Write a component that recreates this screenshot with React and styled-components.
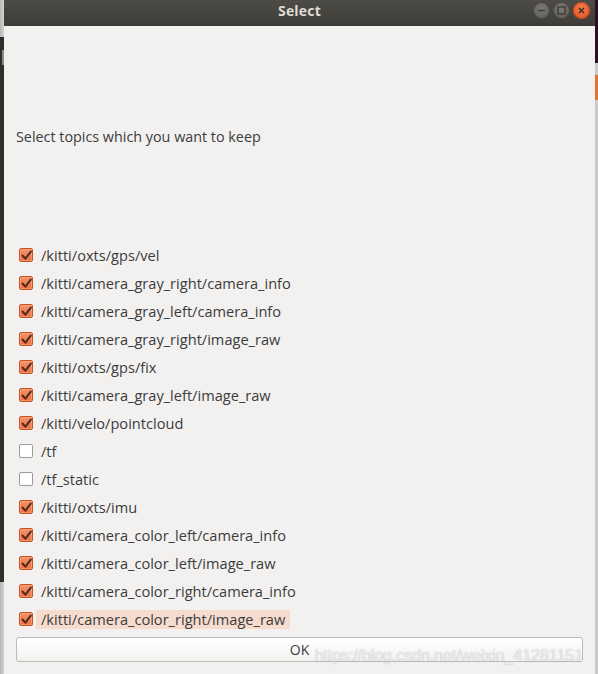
import React from "react";
import styled, { createGlobalStyle } from "styled-components";

const Global = createGlobalStyle`
  html, body { margin: 0; padding: 0; background: #2f2d29; }
  body { font-family: "Open Sans", "DejaVu Sans", sans-serif; }
`;

const Screen = styled.div`
  width: 598px;
  height: 674px;
  display: flex;
  overflow: hidden;
`;

const Side = styled.div`
  width: ${(p) => p.w}px;
  display: flex;
  flex-direction: column;
  flex-shrink: 0;
`;

const SidePiece = styled.div`
  height: ${(p) => (p.h ? `${p.h}px` : "auto")};
  flex: ${(p) => (p.h ? "none" : 1)};
  background: ${(p) => p.bg};
`;

const Win = styled.div`
  flex: 1;
  display: flex;
  flex-direction: column;
  background: #f2f1f0;
`;

const TitleBar = styled.div`
  height: 26px;
  box-sizing: border-box;
  padding-bottom: 5px;
  flex-shrink: 0;
  background: linear-gradient(#4d4b46, #3d3c37);
  display: flex;
  align-items: center;
  justify-content: center;
  position: relative;
  color: #dfdbd2;
  font-weight: 700;
  font-size: 14px;
  letter-spacing: 0.2px;
`;

const Controls = styled.div`
  position: absolute;
  right: 5px;
  top: 2px;
  display: flex;
  gap: 3px;
`;

const Ctrl = styled.div`
  width: 17px;
  height: 17px;
  border-radius: 50%;
  background: ${(p) => (p.close ? "radial-gradient(circle at 50% 35%, #f37a4c, #e0501f)" : "radial-gradient(circle at 50% 35%, #7a7872, #5d5b56)")};
  box-shadow: inset 0 0 0 1px ${(p) => (p.close ? "#b8441c" : "#45433f")};
  display: flex;
  align-items: center;
  justify-content: center;
`;

const Body = styled.div`
  flex: 1;
  display: flex;
  flex-direction: column;
  padding: 0 12px 0 12px;
`;

const Prompt = styled.div`
  margin-top: 101px;
  line-height: 20px;
  font-size: 14.35px;
  color: #3c3c3c;
`;

const List = styled.div`
  margin-top: 94px;
  display: flex;
  flex-direction: column;
`;

const Row = styled.div`
  height: 28px;
  display: flex;
  align-items: center;
  padding-left: 3px;
  gap: 3px;
`;

const Box = styled.div`
  width: 14px;
  height: 14px;
  box-sizing: border-box;
  border-radius: 2px;
  border: 1px solid ${(p) => (p.on ? "#c9521f" : "#9c9a97")};
  background: ${(p) => (p.on ? "linear-gradient(#f69168, #ee7040)" : "#ffffff")};
  box-shadow: ${(p) => (p.on ? "inset 0 0 0 1px rgba(255,200,170,0.35)" : "none")};
  display: flex;
  align-items: center;
  justify-content: center;
`;

const Label = styled.span`
  font-size: 14.6px;
  line-height: 19px;
  padding: 0 5px;
  color: #3c3c3c;
  background: ${(p) => (p.hl ? "#f6dccf" : "transparent")};
`;

const Footer = styled.div`
  margin-top: 4px;
  position: relative;
`;

const OkButton = styled.div`
  height: 25px;
  box-sizing: border-box;
  border: 1px solid #bdbbb8;
  border-radius: 3px;
  background: linear-gradient(#ffffff, #f3f2f1);
  display: flex;
  align-items: center;
  justify-content: center;
  font-size: 14px;
  color: #3c3c3c;
`;

const Mark = styled.span`
  position: absolute;
  right: 0;
  top: 9px;
  font-family: "Liberation Sans", Arial, sans-serif;
  font-size: 16.3px;
  color: rgba(255, 255, 255, 0.8);
  text-shadow: 0 0 1px rgba(0, 0, 0, 0.35);
  letter-spacing: -0.2px;
  pointer-events: none;
`;

const topics = [
  ["/kitti/oxts/gps/vel", true],
  ["/kitti/camera_gray_right/camera_info", true],
  ["/kitti/camera_gray_left/camera_info", true],
  ["/kitti/camera_gray_right/image_raw", true],
  ["/kitti/oxts/gps/fix", true],
  ["/kitti/camera_gray_left/image_raw", true],
  ["/kitti/velo/pointcloud", true],
  ["/tf", false],
  ["/tf_static", false],
  ["/kitti/oxts/imu", true],
  ["/kitti/camera_color_left/camera_info", true],
  ["/kitti/camera_color_left/image_raw", true],
  ["/kitti/camera_color_right/camera_info", true],
  ["/kitti/camera_color_right/image_raw", true],
];

const Check = () => (
  <svg width="11" height="11" viewBox="0 0 10 10">
    <path d="M1.3 5 L4 7.9 L8.9 1.4" fill="none" stroke="#4b2b22" strokeWidth="1.8" strokeLinecap="round" strokeLinejoin="round" />
  </svg>
);

export default function App() {
  return (
    <Screen>
      <Global />
      <Side w={4}>
        <SidePiece h={37} bg="linear-gradient(90deg, #b9b9b9, #d2d2d2)" />
        <SidePiece h={13} bg="#302e2a" />
        <SidePiece h={15} bg="linear-gradient(90deg, #302e2a 0 2px, #8d8b86 2px)" />
        <SidePiece h={517} bg="#302e2a" />
        <SidePiece bg="linear-gradient(90deg, #b5b5b5, #d4d4d4)" />
      </Side>
      <Win>
        <TitleBar>
          Select
          <Controls>
            <Ctrl>
              <svg width="9" height="9" viewBox="0 0 9 9"><path d="M1 4.5 H8" stroke="#3a3935" strokeWidth="1.4" /></svg>
            </Ctrl>
            <Ctrl>
              <svg width="9" height="9" viewBox="0 0 9 9"><rect x="1" y="1" width="7" height="7" fill="none" stroke="#3a3935" strokeWidth="1.3" /></svg>
            </Ctrl>
            <Ctrl close>
              <svg width="9" height="9" viewBox="0 0 9 9"><path d="M2 2 L7 7 M7 2 L2 7" stroke="#3a2a22" strokeWidth="1.4" /></svg>
            </Ctrl>
          </Controls>
        </TitleBar>
        <Body>
          <Prompt>Select topics which you want to keep</Prompt>
          <List>
            {topics.map(([name, on], i) => (
              <Row key={name}>
                <Box on={on}>{on && <Check />}</Box>
                <Label hl={i === topics.length - 1}>{name}</Label>
              </Row>
            ))}
          </List>
          <Footer>
            <OkButton>OK</OkButton>
            <Mark>https://blog.csdn.net/weixin_41281151</Mark>
          </Footer>
        </Body>
      </Win>
      <Side w={3}>
        <SidePiece h={63} bg="#2c1024" />
        <SidePiece h={12} bg="#c9c9c9" />
        <SidePiece h={25} bg="#e0752f" />
        <SidePiece bg="#c9c9c9" />
      </Side>
    </Screen>
  );
}
